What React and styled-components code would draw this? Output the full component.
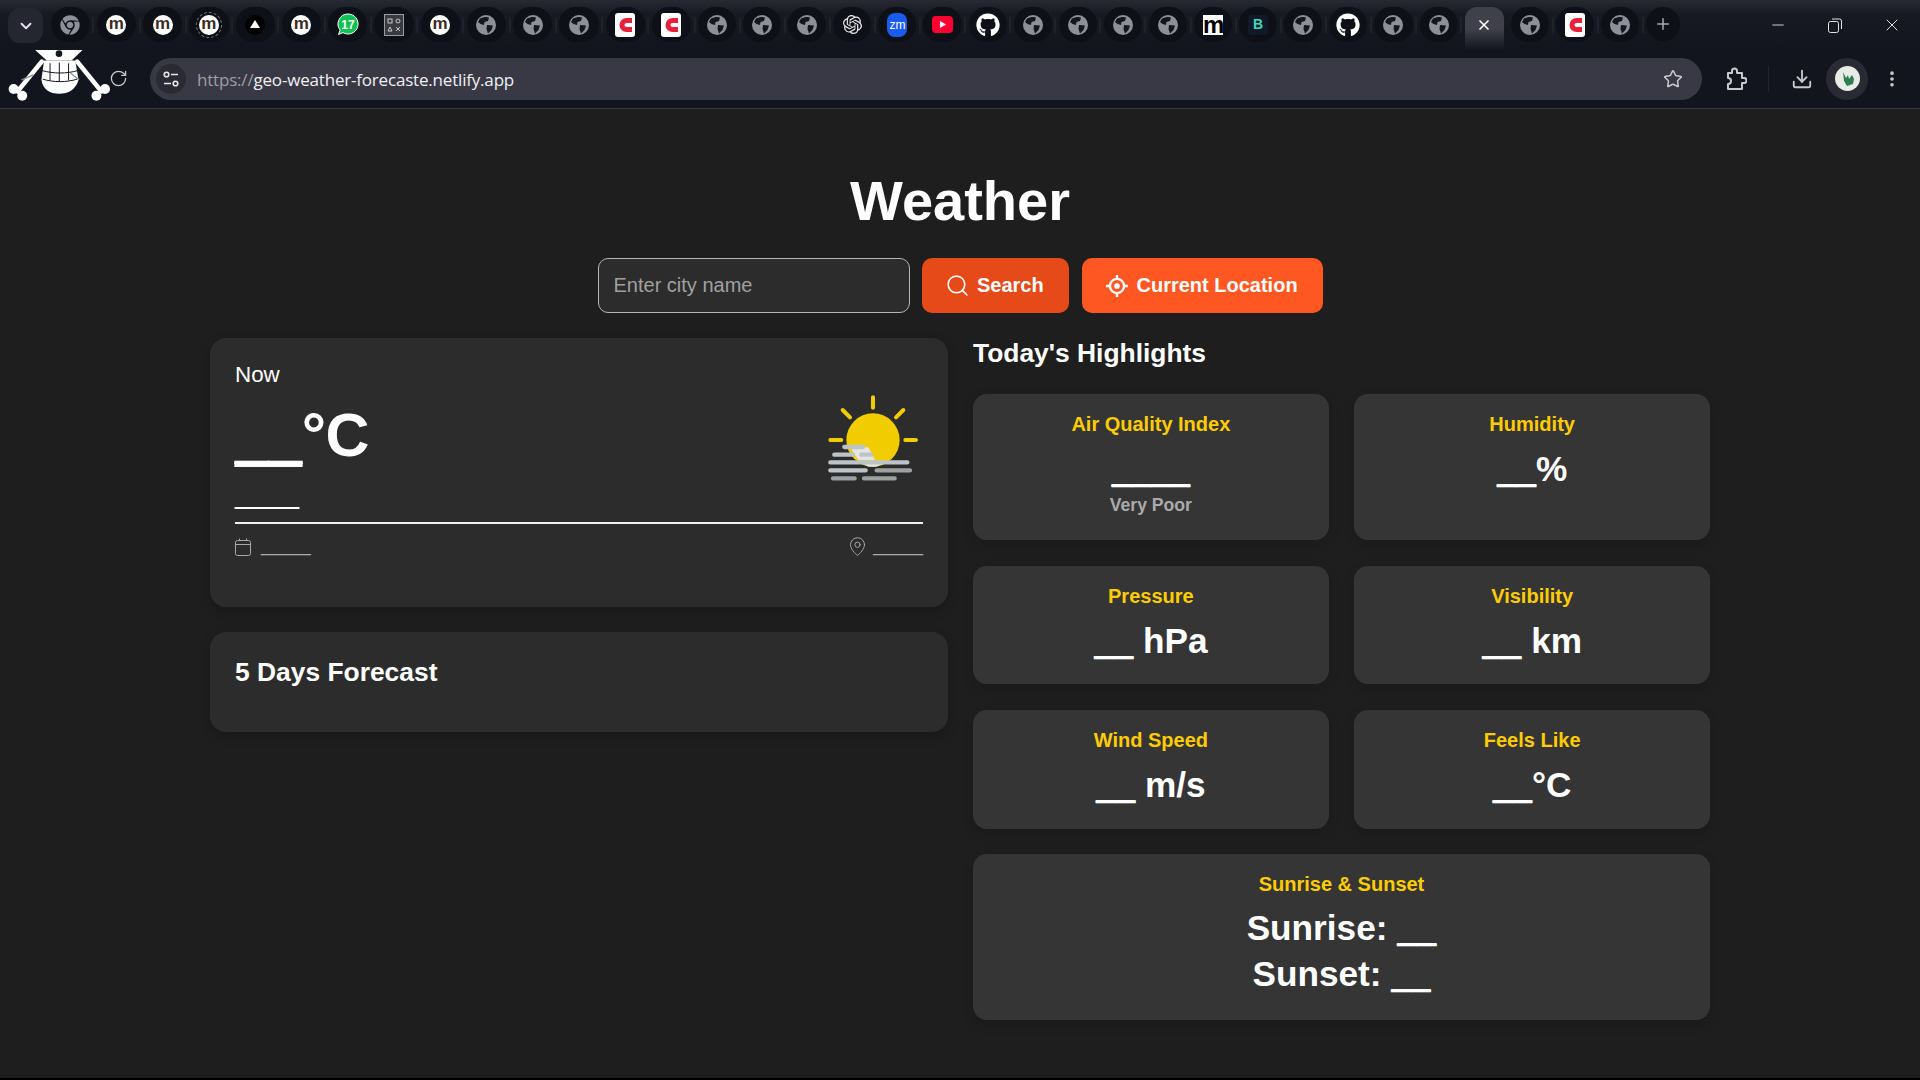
import React from "react";
import styled, { createGlobalStyle } from "styled-components";
import { ChevronDown, X, Plus, Minus, RotateCw, Star, Download, MoreVertical, Search, MapPin } from "lucide-react";
import { FaChrome, FaGithub } from "react-icons/fa";
import { SiOpenai } from "react-icons/si";

const GlobalStyle = createGlobalStyle`
  * { box-sizing: border-box; }
  html, body { margin: 0; padding: 0; background: #000; overflow: hidden; }
  body { font-family: "Liberation Sans", Arial, sans-serif; color: #fff; }
`;

const Page = styled.div`
  height: 1078px;
  display: flex;
  flex-direction: column;
  background: #1e1e1e;
`;

const TabStrip = styled.div`
  height: 50px;
  display: flex;
  align-items: flex-start;
  padding: 7px 0 0 8px;
  background: linear-gradient(#272933 0, #181a23 14px, #13151e 50px);
`;

const TabMenu = styled.div`
  width: 35px;
  height: 35px;
  margin: 1px 4px 0 0;
  border-radius: 12px;
  background: #252631;
  color: #e4e4e8;
  display: flex;
  align-items: center;
  justify-content: center;
`;

const Tab = styled.div`
  position: relative;
  width: ${(p) => p.$w}px;
  height: 35px;
  flex: none;
  display: flex;
  align-items: center;
  justify-content: center;
  &::before {
    content: "";
    position: absolute;
    inset: 0 3.5px;
    border-radius: 17px;
    background: #0e1018;
  }
  &::after {
    content: "";
    position: absolute;
    right: -1px;
    top: 10px;
    width: 2px;
    height: 16px;
    background: #20222b;
  }
  > * { position: relative; z-index: 1; }
`;

const ActiveTab = styled.div`
  width: 46.5px;
  height: 43px;
  flex: none;
  padding: 0 3.5px;
  color: #fff;
  > div {
    height: 100%;
    display: flex;
    align-items: flex-start;
    padding-top: 10px;
    justify-content: center;
    border-radius: 12px 12px 0 0;
    background: linear-gradient(#3f4049 0, #3f4049 22px, #13151e 43px);
  }
`;

const NewTab = styled.div`
  width: 34px;
  height: 34px;
  margin-left: 3px;
  border-radius: 50%;
  background: #0e1018;
  color: #a9aab1;
  display: flex;
  align-items: center;
  justify-content: center;
`;

const WindowControls = styled.div`
  margin: 0 0 0 auto;
  display: flex;
  height: 36px;
  color: #e3e3e6;
`;

const WindowButton = styled.div`
  width: 57px;
  display: flex;
  align-items: center;
  justify-content: center;
`;

const RoundMark = styled.div`
  width: 20px;
  height: 20px;
  border-radius: 50%;
  background: ${(p) => p.$bg || "#fff"};
  color: ${(p) => p.$color || "#3a2a22"};
  font-weight: 700;
  font-size: ${(p) => p.$size || 17}px;
  line-height: 18px;
  text-align: center;
  outline: ${(p) => (p.$ring ? "1.5px dashed #77787e" : "none")};
  outline-offset: 2px;
`;

const SquareMark = styled.div`
  width: 20px;
  height: 20px;
  border-radius: ${(p) => p.$radius || 0}px;
  background: ${(p) => p.$bg || "#fff"};
  color: ${(p) => p.$color || "#000"};
  font-weight: 700;
  font-size: ${(p) => p.$size || 17}px;
  line-height: 19px;
  text-align: center;
`;

const ZoomMark = styled.div`
  width: 20px;
  height: 24px;
  border-radius: 8px;
  background: #1a5cf0;
  color: #fff;
  font-size: 12px;
  line-height: 24px;
  text-align: center;
`;

const Toolbar = styled.div`
  height: 59px;
  display: flex;
  align-items: center;
  padding-bottom: 1px;
  background: #13151e;
  border-bottom: 1px solid #3a3b42;
  color: #c9c9cd;
`;

const Logo = styled.svg`
  flex: none;
  align-self: flex-start;
  display: block;
`;

const Reload = styled.div`
  width: 16px;
  margin-right: 24px;
  display: flex;
  align-items: center;
  justify-content: center;
  svg { flex: none; }
`;

const AddressBar = styled.div`
  flex: 1;
  height: 42px;
  border-radius: 21px;
  background: #393945;
  display: flex;
  align-items: center;
  padding: 0 19px 0 6px;
`;

const SiteInfo = styled.div`
  width: 30px;
  height: 30px;
  border-radius: 50%;
  background: #2a2a35;
  display: flex;
  align-items: center;
  justify-content: center;
  margin-right: 11px;
  color: #e8e8ea;
`;

const Url = styled.div`
  flex: 1;
  padding-top: 1px;
  font-family: "Open Sans", sans-serif;
  font-size: 17px;
  color: #f0f0f4;
  white-space: nowrap;
  letter-spacing: -0.19px;
  span { color: #9d9da6; }
`;

const ToolbarEnd = styled.div`
  width: 218px;
  flex: none;
  display: flex;
  align-items: center;
  padding-left: 23px;
`;

const Divider = styled.div`
  width: 1px;
  height: 26px;
  margin: 0 22px 0 21px;
  background: #23252d;
`;

const AvatarRing = styled.div`
  width: 42px;
  height: 42px;
  margin: 0 14px 0 13px;
  border-radius: 50%;
  background: #2a2a35;
  display: flex;
  align-items: center;
  justify-content: center;
`;

const Main = styled.main`
  flex: 1;
  padding-top: 60px;
  display: flex;
  flex-direction: column;
  align-items: center;
`;

const Title = styled.h1`
  margin: 0 0 25px;
  font-size: 56px;
  line-height: 64px;
  font-weight: 700;
`;

const SearchRow = styled.div`
  display: flex;
  gap: 12.5px;
  height: 55px;
  margin-bottom: 25px;
`;

const CityInput = styled.input`
  width: 312px;
  height: 100%;
  padding: 0 15px;
  font: 20px "Liberation Sans", Arial, sans-serif;
  color: #fff;
  background: #2c2c2c;
  border: 1px solid #b5b5b5;
  border-radius: 10px;
  outline: none;
  &::placeholder { color: #a0a0a0; opacity: 1; }
`;

const ActionButton = styled.button`
  width: ${(p) => p.$w}px;
  height: 100%;
  padding: 0 0 0 ${(p) => p.$pad}px;
  display: flex;
  align-items: center;
  gap: ${(p) => p.$gap}px;
  border: none;
  border-radius: 10px;
  color: #fff;
  font: 700 20px "Liberation Sans", Arial, sans-serif;
  background: ${(p) => p.$bg};
`;

const Columns = styled.div`
  width: 1500px;
  display: grid;
  grid-template-columns: 738px 737px;
  gap: 25px;
  align-items: start;
`;

const LeftColumn = styled.div`
  display: flex;
  flex-direction: column;
  gap: 25px;
`;

const Card = styled.section`
  background: #2c2c2c;
  border-radius: 16px;
  padding: 25px;
  box-shadow: 0 4px 12px rgba(0, 0, 0, 0.2);
`;

const NowLabel = styled.div`
  font-size: 22.4px;
  line-height: 24px;
  margin-bottom: 13px;
`;

const NowRow = styled.div`
  display: flex;
  justify-content: space-between;
  align-items: flex-start;
`;

const Temp = styled.div`
  font-size: 60.8px;
  line-height: 70px;
  font-weight: 700;
  letter-spacing: -0.5px;
`;

const WeatherIcon = styled.svg`
  display: block;
  margin-top: -7px;
`;

const Description = styled.div`
  font-size: 28.8px;
  line-height: 33px;
  margin: -6px 0 12px;
`;

const Rule = styled.hr`
  margin: 0 0 7px;
  border: none;
  height: 2px;
  background: #f0f0f0;
`;

const MetaRow = styled.div`
  display: flex;
  justify-content: space-between;
  margin-bottom: 25px;
  color: #aaa;
  font-size: 22.4px;
  line-height: 26px;
`;

const MetaItem = styled.div`
  display: flex;
  align-items: center;
  gap: ${(p) => p.$gap}px;
  svg { flex: none; margin-top: 5px; }
`;

const CardTitle = styled.h2`
  margin: 0 0 ${(p) => p.$mb || 0}px;
  font-size: 26.4px;
  line-height: 30px;
  font-weight: 700;
`;

const HighlightGrid = styled.div`
  display: grid;
  grid-template-columns: 1fr 1fr;
  gap: 25.6px;
`;

const Stat = styled.div`
  grid-column: ${(p) => (p.$wide ? "span 2" : "auto")};
  background: #353535;
  border-radius: 14px;
  padding: 19.2px 10px ${(p) => (p.$wide ? 23.6 : 22.8)}px;
  text-align: center;
  box-shadow: 0 4px 12px rgba(0, 0, 0, 0.15);
`;

const StatLabel = styled.div`
  font-size: 20px;
  line-height: 23px;
  font-weight: 700;
  color: #ffcc00;
  margin-bottom: ${(p) => (p.$wide ? 9 : 13.2)}px;
`;

const StatValue = styled.div`
  font-size: 35.2px;
  line-height: ${(p) => (p.$wide ? 45.76 : 40.4)}px;
  font-weight: 700;
`;

// the placeholder dashes sit heavier in the original than this font draws them
const Blank = styled.span`
  text-shadow: 0 0.02em 0 currentColor, 0 0.04em 0 currentColor, 0 0.06em 0 currentColor;
`;

const StatNote = styled.div`
  margin-top: 4.4px;
  font-size: 17.6px;
  line-height: 23.2px;
  font-weight: 700;
  color: #aaa;
`;

const Globe = () => (
  <svg width="20" height="20" viewBox="0 0 20 20">
    <circle cx="10" cy="10" r="10" fill="#8e9099" />
    <path d="M4 3.5 C7 2 11 1.5 13 2.5 L12 6 L8.5 7 L8 10 L4.5 9 L2 7 Z" fill="#14161e" />
    <path d="M11 10 L17 10.5 L15.5 15 L12 18.5 L10.5 14 Z" fill="#14161e" />
  </svg>
);

const WhatsAppBadge = () => (
  <svg width="22" height="23" viewBox="0 0 22 23">
    <path d="M11 1a10 10 0 1 1-5 18.6L1.5 21.5l1.6-4.4A10 10 0 0 1 11 1z" fill="#10c254" stroke="#fff" strokeWidth="1" />
    <text x="11" y="15.5" textAnchor="middle" fontSize="12" fontWeight="700" fill="#fff" fontFamily="Liberation Sans">17</text>
  </svg>
);

const PlayMark = () => (
  <svg width="21" height="17" viewBox="0 0 21 17">
    <rect width="21" height="17" rx="4" fill="#ff0033" />
    <path d="M8 5l6 3.5L8 12z" fill="#fff" />
  </svg>
);

const ConsoleMark = () => (
  <svg width="20" height="22" viewBox="0 0 20 22">
    <rect x="0.5" y="0.5" width="19" height="21" fill="#3a3b40" stroke="#9a9ba0" />
    <g fill="none" stroke="#c4c5c8" strokeWidth="1">
      <rect x="4" y="5" width="4" height="4" />
      <circle cx="14" cy="7" r="2" />
      <path d="M6 13l2 4H4zM12 13l4 4M16 13l-4 4" />
    </g>
  </svg>
);

const RedC = () => (
  <svg width="20" height="24" viewBox="0 0 20 24">
    <rect width="20" height="24" rx="3" fill="#fff" />
    <path d="M17 7.5H11.5A4.5 4.5 0 0 0 11.5 16.5H17" fill="none" stroke="#e8213a" strokeWidth="5" />
  </svg>
);

const Triangle = () => (
  <svg width="20" height="20" viewBox="0 0 20 20">
    <circle cx="10" cy="10" r="10" fill="#000" />
    <path d="M10 5l5 8H5z" fill="#fff" />
  </svg>
);

const Favicon = ({ kind }) => {
  switch (kind) {
    case "chrome": return <FaChrome size={20} color="#8e9099" />;
    case "m": return <RoundMark>m</RoundMark>;
    case "ring": return <RoundMark $ring>m</RoundMark>;
    case "tri": return <Triangle />;
    case "wa": return <WhatsAppBadge />;
    case "qr": return <ConsoleMark />;
    case "c": return <RedC />;
    case "ai": return <SiOpenai size={19} color="#e8e8e8" />;
    case "zm": return <ZoomMark>zm</ZoomMark>;
    case "yt": return <PlayMark />;
    case "gh": return <FaGithub size={24} color="#fff" />;
    case "msq": return <SquareMark $size={24}>m</SquareMark>;
    case "b": return <SquareMark $bg="#10192a" $color="#3fd8b8" $size={14} $radius={4}>B</SquareMark>;
    default: return <Globe />;
  }
};

const TABS = [
  "chrome", "m", "m", "ring", "tri", "m", "wa", "qr", "m", "g", "g", "g", "c", "c", "g", "g", "g", "ai",
  "zm", "yt", "gh", "g", "g", "g", "g", "msq", "b", "g", "gh", "g", "g", "active", "g", "c", "g",
];

const SkullLogo = () => (
  <Logo width="110" height="53" viewBox="0 60 330 160">
    <g stroke="#fff" strokeWidth="14" strokeLinecap="round">
      <path d="M125 95 L52 185" />
      <path d="M232 95 L305 185" />
    </g>
    <g fill="#fff">
      <circle cx="40" cy="178" r="15" />
      <circle cx="66" cy="198" r="15" />
      <circle cx="316" cy="178" r="15" />
      <circle cx="290" cy="198" r="15" />
      <path d="M105 60 H248 L215 92 H140 Z" />
      <path d="M132 92 H226 L236 150 C228 180 205 192 178 192 C150 192 128 180 124 150 Z" />
    </g>
    <circle cx="177" cy="71" r="10" fill="#14161e" />
    <path d="M64 150 L100 135 M212 130 L238 150" stroke="#8b8c90" strokeWidth="4" />
    <g stroke="#14161e" strokeWidth="3" fill="none">
      <path d="M126 122 C160 132 200 132 234 122 M128 148 C160 158 200 158 232 148" />
      <path d="M150 100 V152 M178 98 V156 M206 100 V152" />
    </g>
  </Logo>
);

const TuneIcon = () => (
  <svg width="18" height="18" viewBox="0 0 18 18" fill="none" stroke="currentColor" strokeWidth="1.6">
    <circle cx="4.5" cy="4.5" r="2.3" />
    <path d="M9 4.5h7M2 13.5h7" />
    <circle cx="13.5" cy="13.5" r="2.3" />
  </svg>
);

const PuzzleIcon = () => (
  <svg width="22" height="24" viewBox="0 0 22 24" fill="none" stroke="currentColor" strokeWidth="2" strokeLinejoin="round">
    <path d="M3 6h4V4a2.5 2.5 0 0 1 5 0v2h5v5h2a2.5 2.5 0 0 1 0 5h-2v6H3v-5a3 3 0 0 0 0-6z" />
  </svg>
);

const RestoreIcon = () => (
  <svg width="14" height="15" viewBox="0 0 14 15" fill="none" stroke="currentColor" strokeWidth="1">
    <rect x="0.5" y="3.5" width="10" height="11" rx="2" />
    <path d="M4 1h7.5a2 2 0 0 1 2 2v8" />
  </svg>
);

const AvatarIcon = () => (
  <svg width="25" height="25" viewBox="0 0 25 25">
    <circle cx="12.5" cy="12.5" r="12.5" fill="#e9ece6" />
    <path d="M8 6l3 6 2-3 1 4 3-4 2 4-1 5-6 2-3-5z" fill="#2e7d4f" />
  </svg>
);

const LocateIcon = () => (
  <svg width="24" height="24" viewBox="0 0 22 22" fill="none" stroke="#fff">
    <circle cx="11" cy="11" r="6.5" strokeWidth="2.2" />
    <circle cx="11" cy="11" r="2.6" fill="#fff" stroke="none" />
    <path d="M11 1v3.5M11 17.5V21M1 11h3.5M17.5 11H21" strokeWidth="2.2" />
  </svg>
);

const CalendarIcon = () => (
  <svg width="16" height="18" viewBox="0 0 16 18" fill="none" stroke="currentColor" strokeWidth="1">
    <rect x="0.5" y="2.5" width="15" height="15" rx="2" />
    <path d="M0.5 6.5h15M4.5 0.5v2M11.5 0.5v2" />
  </svg>
);

// native coordinates are 3x the on-screen size
const FogSun = () => (
  <WeatherIcon width="96" height="90" viewBox="81 99 288 270">
    <g stroke="#f1cc00" strokeWidth="12" strokeLinecap="round">
      <path d="M219 112V143M128 150L150 172M310 150L288 172M91 240H124M316 240H348" />
    </g>
    <circle cx="219" cy="240" r="80" fill="#f1cc00" />
    <path d="M150 262H205L225 300H175Z" fill="#e4e5e3" />
    <path d="M190 312H248L228 320H205Z" fill="#e4e5e3" />
    <g strokeWidth="13" strokeLinecap="round">
      <g stroke="#bcc4c9">
        <path d="M133 261H189M103 284H159M184 284H214M91 307H322M91 331H197" />
      </g>
      <g stroke="#9ea1a1">
        <path d="M230 331H330M99 355H164M192 355H284" />
      </g>
    </g>
  </WeatherIcon>
);

const App = () => (
  <>
    <GlobalStyle />
    <Page>
      <TabStrip>
        <TabMenu><ChevronDown size={18} strokeWidth={2.5} /></TabMenu>
        {TABS.map((kind, i) =>
          kind === "active" ? (
            <ActiveTab key={i}><div><X size={16} strokeWidth={2.5} /></div></ActiveTab>
          ) : (
            <Tab key={i} $w={i < 14 ? 46.25 : 45.1}><Favicon kind={kind} /></Tab>
          )
        )}
        <NewTab><Plus size={18} /></NewTab>
        <WindowControls>
          <WindowButton><Minus size={18} strokeWidth={1.2} /></WindowButton>
          <WindowButton><RestoreIcon /></WindowButton>
          <WindowButton><X size={20} strokeWidth={1.2} /></WindowButton>
        </WindowControls>
      </TabStrip>

      <Toolbar>
        <SkullLogo />
        <Reload><RotateCw size={19} strokeWidth={1.6} /></Reload>
        <AddressBar>
          <SiteInfo><TuneIcon /></SiteInfo>
          <Url><span>https://</span>geo-weather-forecaste.netlify.app</Url>
          <Star size={20} strokeWidth={1.8} />
        </AddressBar>
        <ToolbarEnd>
          <PuzzleIcon />
          <Divider />
          <Download size={22} strokeWidth={2} />
          <AvatarRing><AvatarIcon /></AvatarRing>
          <MoreVertical size={20} strokeWidth={2.4} />
        </ToolbarEnd>
      </Toolbar>

      <Main>
        <Title>Weather</Title>
        <SearchRow>
          <CityInput placeholder="Enter city name" />
          <ActionButton $w={147} $pad={23} $gap={7} $bg="#e64a19">
            <Search size={25} strokeWidth={1.5} />Search
          </ActionButton>
          <ActionButton $w={241} $pad={23} $gap={8} $bg="#ff5722">
            <LocateIcon />Current Location
          </ActionButton>
        </SearchRow>

        <Columns>
          <LeftColumn>
            <Card>
              <NowLabel>Now</NowLabel>
              <NowRow>
                <Temp><Blank>__</Blank>°C</Temp>
                <FogSun />
              </NowRow>
              <Description>____</Description>
              <Rule />
              <MetaRow>
                <MetaItem $gap={10}><CalendarIcon /><span>____</span></MetaItem>
                <MetaItem $gap={5}><MapPin size={21} strokeWidth={1.1} /><span>____</span></MetaItem>
              </MetaRow>
            </Card>
            <Card>
              <CardTitle $mb={20}>5 Days Forecast</CardTitle>
            </Card>
          </LeftColumn>

          <div>
            <CardTitle $mb={26}>Today's Highlights</CardTitle>
            <HighlightGrid>
              <Stat>
                <StatLabel>Air Quality Index</StatLabel>
                <StatValue><Blank>____</Blank></StatValue>
                <StatNote>Very Poor</StatNote>
              </Stat>
              <Stat>
                <StatLabel>Humidity</StatLabel>
                <StatValue><Blank>__</Blank>%</StatValue>
              </Stat>
              <Stat>
                <StatLabel>Pressure</StatLabel>
                <StatValue><Blank>__</Blank> hPa</StatValue>
              </Stat>
              <Stat>
                <StatLabel>Visibility</StatLabel>
                <StatValue><Blank>__</Blank> km</StatValue>
              </Stat>
              <Stat>
                <StatLabel>Wind Speed</StatLabel>
                <StatValue><Blank>__</Blank> m/s</StatValue>
              </Stat>
              <Stat>
                <StatLabel>Feels Like</StatLabel>
                <StatValue><Blank>__</Blank>°C</StatValue>
              </Stat>
              <Stat $wide>
                <StatLabel $wide>Sunrise &amp; Sunset</StatLabel>
                <StatValue $wide>Sunrise: <Blank>__</Blank></StatValue>
                <StatValue $wide>Sunset: <Blank>__</Blank></StatValue>
              </Stat>
            </HighlightGrid>
          </div>
        </Columns>
      </Main>
    </Page>
  </>
);

export default App;
